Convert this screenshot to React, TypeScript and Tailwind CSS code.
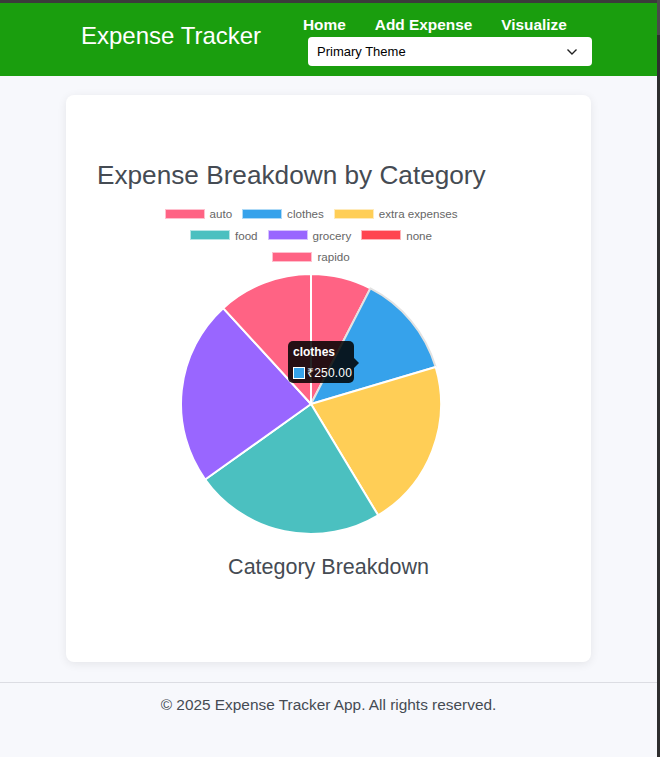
import React from "react";

const slices = [
  { name: "auto", color: "#ff6384", a0: 0, a1: 27.2 },
  { name: "clothes", color: "#36a2eb", a0: 27.2, a1: 73.5 },
  { name: "extra expenses", color: "#ffce56", a0: 73.5, a1: 148.9 },
  { name: "food", color: "#4bc0c0", a0: 148.9, a1: 234.5 },
  { name: "grocery", color: "#9966ff", a0: 234.5, a1: 317.5 },
  { name: "rapido", color: "#ff6384", a0: 317.5, a1: 360 },
];

const legendRows = [
  [
    { name: "auto", color: "#ff6384" },
    { name: "clothes", color: "#36a2eb" },
    { name: "extra expenses", color: "#ffce56" },
  ],
  [
    { name: "food", color: "#4bc0c0" },
    { name: "grocery", color: "#9966ff" },
    { name: "none", color: "#ff4550" },
  ],
  [{ name: "rapido", color: "#ff6384" }],
];

function pt(cx: number, cy: number, r: number, deg: number) {
  const t = (deg * Math.PI) / 180;
  return [cx + r * Math.sin(t), cy - r * Math.cos(t)];
}

function slicePath(cx: number, cy: number, r: number, a0: number, a1: number) {
  const [x0, y0] = pt(cx, cy, r, a0);
  const [x1, y1] = pt(cx, cy, r, a1);
  const large = a1 - a0 > 180 ? 1 : 0;
  return `M ${cx} ${cy} L ${x0} ${y0} A ${r} ${r} 0 ${large} 1 ${x1} ${y1} Z`;
}

export default function App() {
  const cx = 214;
  const cy = 131;
  const r = 130;
  return (
    <div className="min-h-[757px] bg-[#f7f8fc] flex font-['Liberation_Sans',Arial,sans-serif]">
      <div className="flex-1 flex flex-col">
        <div className="h-[3px] bg-[#3b3b3b]" />
        <header className="h-[73px] bg-[#1a9e0e] flex items-start">
          <div className="ml-[81px] mt-[19px] w-[222px] text-white text-[24px] leading-[28px]">
            Expense Tracker
          </div>
          <div className="flex flex-col">
            <nav className="mt-[13px] flex gap-[29px] text-white font-bold text-[15.4px] leading-[18px]">
              <span>Home</span>
              <span>Add Expense</span>
              <span>Visualize</span>
            </nav>
            <div className="mt-[3px] ml-[5px] w-[284px] h-[29px] bg-white rounded-[4px] flex items-center justify-between pl-[9px] pr-[14px]">
              <span className="text-[13px] text-black">Primary Theme</span>
              <svg width="12" height="8" viewBox="0 0 12 8">
                <path d="M1.5 1.5 L6 6 L10.5 1.5" fill="none" stroke="#222" strokeWidth="1.4" />
              </svg>
            </div>
          </div>
        </header>

        <main className="flex-1">
          <div className="mt-[19px] mx-[66px] h-[567px] bg-white rounded-lg shadow-[0_2px_10px_rgba(0,0,0,0.08)] px-[31px] pt-[65px]">
            <h2 className="text-[26.2px] leading-[30px] text-[#454b53] whitespace-nowrap">Expense Breakdown by Category</h2>
            <div className="relative mt-[13px] w-[428px]">
              <div className="flex flex-col">
                {legendRows.map((row, i) => (
                  <div key={i} className="h-[21.5px] flex items-center justify-center gap-[10px]">
                    {row.map((it) => (
                      <div key={it.name} className="flex items-center">
                        <div
                          className="w-[40px] h-[10px] border border-white/60 shrink-0"
                          style={{ backgroundColor: it.color }}
                        />
                        <span className="ml-[5px] text-[11.6px] text-[#666]">{it.name}</span>
                      </div>
                    ))}
                  </div>
                ))}
              </div>
              <svg width="428" height="262" className="mt-[5px] block">
                {slices.map((s) => (
                  <path
                    key={s.name}
                    d={slicePath(cx, cy, r, s.a0, s.a1)}
                    fill={s.color}
                    stroke={s.name === "clothes" ? "#e2e2e2" : "#ffffff"}
                    strokeWidth={2}
                    strokeLinejoin="round"
                  />
                ))}
              </svg>
              <div className="absolute left-[191px] top-[138px] w-[66px] h-[42px] rounded-[5px] bg-black/85 px-[5px] pt-[4px]">
                <div className="text-white font-bold text-[12px] leading-[15px] whitespace-nowrap">clothes</div>
                <div className="mt-[6px] flex items-center whitespace-nowrap">
                  <div className="w-[12px] h-[12px] shrink-0 border border-white bg-[#36a2eb]" />
                  <span className="ml-[2px] text-white text-[12px] leading-[14px] tracking-[0.2px]">₹250.00</span>
                </div>
                <div className="absolute right-[-5px] top-[17px] w-0 h-0 border-y-[5px] border-y-transparent border-l-[5px] border-l-black/85" />
              </div>
            </div>
            <div className="mt-[19px] text-center text-[21.5px] leading-[26px] text-[#454b53]">Category Breakdown</div>
          </div>
        </main>

        <footer className="mt-[20px] border-t border-[#dcdde3] h-[75px] pt-[12px] text-center text-[15.4px] leading-[20px] text-[#454b53]">
          © 2025 Expense Tracker App. All rights reserved.
        </footer>
      </div>
      <div className="w-[3px] flex flex-col bg-[#2e2e2e]">
        <div className="h-[35px] bg-[#4a4a4a]" />
      </div>
    </div>
  );
}
